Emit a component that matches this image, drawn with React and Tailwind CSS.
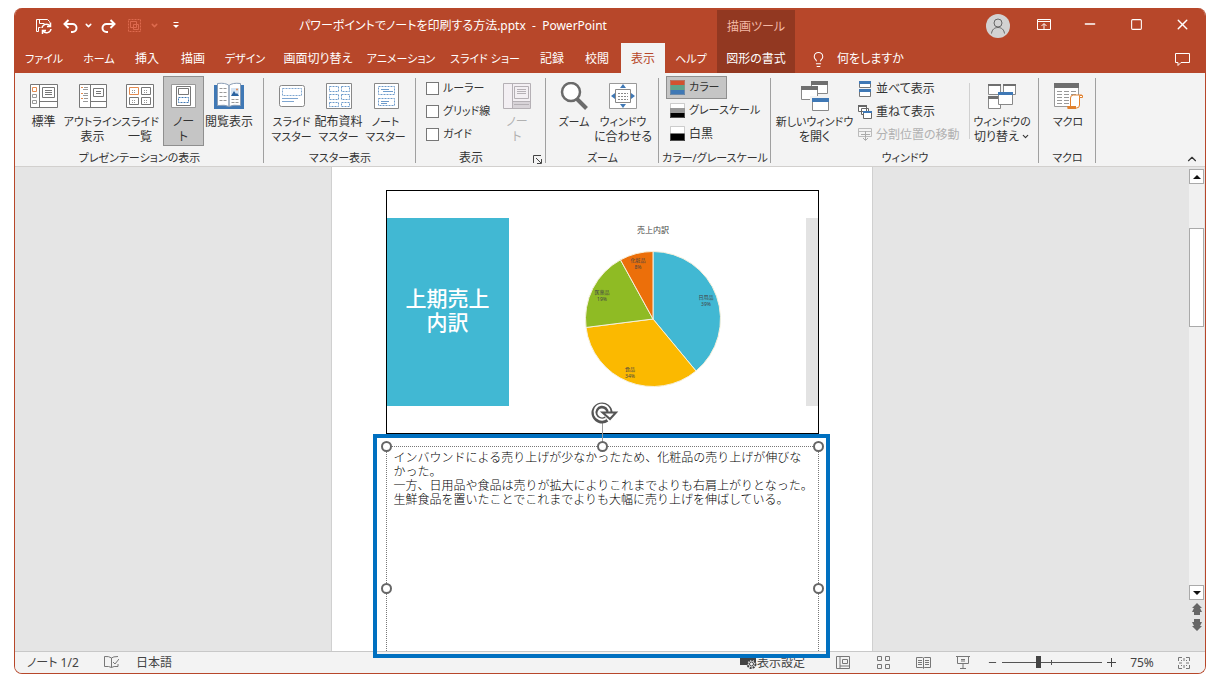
import React from "react";
import { ChevronDown, ChevronUp, Lightbulb, Minus, Square, X } from "lucide-react";

const TABS = [
  { label: "ファイル", width: "w-[58px]" },
  { label: "ホーム", width: "w-[52px]" },
  { label: "挿入", width: "w-[44px]" },
  { label: "描画", width: "w-[48px]" },
  { label: "デザイン", width: "w-[56px]" },
  { label: "画面切り替え", width: "w-[90px]" },
  { label: "アニメーション", width: "w-[76px]" },
  { label: "スライド ショー", width: "w-[92px]" },
  { label: "記録", width: "w-[42px]" },
  { label: "校閲", width: "w-[48px]" },
  { label: "表示", width: "w-[44px]", active: true },
  { label: "ヘルプ", width: "w-[52px]" },
  { label: "図形の書式", width: "w-[78px]", context: true },
];

const SLICES = [
  { name: "日用品", percent: 39, color: "#41b8d3", x: 121, y: 48 },
  { name: "食品", percent: 34, color: "#fbb900", x: 45, y: 120 },
  { name: "医薬品", percent: 19, color: "#8fbb24", x: 17, y: 43 },
  { name: "化粧品", percent: 8, color: "#ec6f0a", x: 53, y: 11 },
];

const NOTES = [
  "インバウンドによる売り上げが少なかったため、化粧品の売り上げが伸びな",
  "かった。",
  "一方、日用品や食品は売りが拡大によりこれまでよりも右肩上がりとなった。",
  "生鮮食品を置いたことでこれまでよりも大幅に売り上げを伸ばしている。",
].join("\n");

// long katakana labels are set one size smaller so they fit their buttons
const labelSize = (text) => (/[ァ-ヶー]{3,}/.test(text) ? "text-[11px]" : "text-[12px]");

const Svg = ({ w = 28, h = 26, children, className = "" }) => (
  <svg
    width={w}
    height={h}
    viewBox={`0 0 ${w} ${h}`}
    fill="none"
    stroke="#777"
    className={`shrink-0 ${className}`}
    aria-hidden="true"
  >
    {children}
  </svg>
);

/* ---------- Ribbon icons ---------- */

const NormalIcon = () => (
  <Svg>
    <path d="M.5 1.5h27v23H.5zM9.5 1.5v23M9.5 18.5h18" fill="#fff" />
    <path d="M12.5 4.5h12v10h-12zM15 7.5h7M15 9.5h7M15 11.5h7" />
    <path d="M2.5 4.5h4v4h-4z" stroke="#e38a4f" />
    <path d="M2.5 11.5h4v3h-4zM2.5 17.5h4v3h-4z" stroke="#999" />
  </Svg>
);

const OutlineIcon = () => (
  <Svg>
    <path d="M.5 1.5h27v23H.5zM11.5 1.5v23M11.5 18.5h16" fill="#fff" />
    <path d="M14.5 5.5h10v8h-10zM17 8.5h5M17 10.5h5" />
    <path d="M2 4.5h2M2 10.5h2M2 15.5h2" stroke="#e38a4f" />
    <path d="M5 4.5h4M4 6.5h5M5 10.5h4M4 12.5h5M5 15.5h4M4 18.5h5" stroke="#999" />
  </Svg>
);

const SorterIcon = () => (
  <Svg>
    <path d="M.5 1.5h27v23H.5z" fill="#fff" />
    <path d="M3.5 4.5h9v7h-9z" stroke="#e38a4f" />
    <path d="M15.5 4.5h9v7h-9zM3.5 14.5h9v7h-9zM15.5 14.5h9v7h-9z" />
    <path d="M6 7.5h4M6 9.5h4M18 7.5h4M18 9.5h4M6 17.5h4M6 19.5h4M18 17.5h4M18 19.5h4" stroke="#999" strokeDasharray="1 1" />
  </Svg>
);

const NotesPageIcon = () => (
  <Svg>
    <path d="M1.5 1.5h24v23h-24z" fill="#fff" stroke="#999" />
    <path d="M6.5 3.5h14v19h-14zM8.5 5.5h10v6h-10z" />
    <path d="M8.5 14.5h10v5h-10z" stroke="#3f78b5" strokeDasharray="2 1" />
  </Svg>
);

const ReadingIcon = () => (
  <Svg w={30} h={28}>
    <path d="M0 3h5v22H0zM25 3h5v22h-5zM0 23h30v4H0z" fill="#3f78b5" stroke="none" />
    <path d="M3.5 1.5q8-1 11.5 2v21q-4-2-11.5-1zM26.5 1.5q-8-1-11.5 2v21q4-2 11.5-1z" fill="#fff" stroke="#8a9db5" />
    <path d="M5.5 6.5h7M5.5 10.5h7M5.5 14.5h7M5.5 18.5h7M17.5 17.5h7M17.5 20.5h7" stroke="#999" strokeDasharray="3 1" />
    <path d="M17 6h8v8h-8z" fill="#d6e4f3" stroke="none" />
    <path d="M17 14l3-5 2 3 1-1 2 3z" fill="#2b63a0" stroke="none" />
    <circle cx="23" cy="7.5" r="1" fill="#e38a4f" stroke="none" />
  </Svg>
);

const SlideMasterIcon = () => (
  <Svg>
    <rect x="1.5" y="2.5" width="25" height="21" rx="2" fill="#fff" stroke="#888" />
    <path d="M4.5 5.5h19v7h-19z" stroke="#7fa6d0" strokeDasharray="2 1" />
    <path d="M4 15.5h16M4 18.5h12" stroke="#7fa6d0" />
  </Svg>
);

const HandoutIcon = () => (
  <Svg>
    <path d="M1.5.5h25v25h-25z" fill="#fff" stroke="#888" />
    <path
      d="M4.500 3.500h9v5h-9zM16.500 3.500h8v5h-8zM4.500 11.500h9v5h-9zM16.500 11.500h8v5h-8zM4.500 19.500h9v4h-9zM16.500 19.500h8v4h-8z"
      stroke="#6d9bcb"
      strokeDasharray="2 1"
    />
  </Svg>
);

const NotesMasterIcon = () => (
  <Svg>
    <path d="M2.5.5h24v25h-24z" fill="#fff" stroke="#888" />
    <path d="M6.5 3.500h16v8h-16zM6.500 15.500h16v7h-16z" stroke="#6d9bcb" strokeDasharray="2 1" />
    <path d="M9 6.5h8M11 8.5h10M9 18.500h8M9 20.500h6" stroke="#6d9bcb" />
  </Svg>
);

const NotesPaneIcon = () => (
  <Svg>
    <path d="M.5.5h27v25H.5z" fill="#f3eff3" stroke="#b5b0b5" />
    <path d="M10 19h17v6H10z" fill="#d8d3d8" stroke="none" />
    <path d="M9.5.5v25M9.5 18.5h18M11.5 3.5h14v12h-14zM14 6.5h9M14 8.5h9M14 10.5h9M11 21.5h15" stroke="#b5b0b5" />
  </Svg>
);

const ZoomIcon = () => (
  <Svg h={28}>
    <path d="M17 17l9.500 9.500" stroke="#6b6b6b" strokeWidth="4" />
    <circle cx="11" cy="10" r="9" fill="#fff" stroke="#6b6b6b" strokeWidth="2.500" />
  </Svg>
);

const FitIcon = () => (
  <Svg>
    <path d="M.5.5h27v25H.5z" fill="#fff" stroke="#999" />
    <path d="M6.5 6.5h15v13h-15z" stroke="#888" />
    <path d="M9 10.500h10M9 13.500h10M9 16.500h10" stroke="#888" strokeDasharray="2 1" />
    <path d="M14 1l3 4h-6zM14 25l3-4h-6zM2 13l4-3v6zM26 13l-4-3v6z" fill="#3f78b5" stroke="none" />
  </Svg>
);

const NewWindowIcon = () => (
  <Svg h={30}>
    <path d="M10.5.5h16v12h-16z" fill="#fff" stroke="#888" />
    <path d="M10 0h17v4H10z" fill="#6f6f6f" stroke="none" />
    <path d="M.5 5.500h16v13H.5z" fill="#fff" stroke="#888" />
    <path d="M0 5h17v4H0z" fill="#6f6f6f" stroke="none" />
    <path d="M9 15h19v15H9z" fill="#f3f3f3" stroke="none" />
    <path d="M11.5 17.500h16v12h-16z" fill="#fff" stroke="#888" />
    <path d="M11 17h17v4H11z" fill="#3f78b5" stroke="none" />
  </Svg>
);

const SwitchWindowIcon = () => (
  <Svg>
    <path d="M.5 1.500h12v10H.5zM15.500 1.500h12v10h-12zM.5 14.500h12v11H.5z" fill="#fff" stroke="#888" />
    <path d="M0 1h13v2H0zM15 1h13v2H15zM0 13h13v3H0z" fill="#6f6f6f" stroke="none" />
    <path d="M10.500 10.500h14v11h-14z" fill="#fff" stroke="#888" />
    <path d="M10 9h15v3H10z" fill="#3f78b5" stroke="none" />
  </Svg>
);

const MacroIcon = () => (
  <Svg w={30} h={28}>
    <path d="M1.500 1.500h24v23h-24z" fill="#fff" stroke="#999" />
    <path d="M1 1h25v5H1z" fill="#6f6f6f" stroke="none" />
    <path d="M4 9.500h20M4 12.500h20M4 15.500h20M4 18.500h20M4 21.500h20" stroke="#999" strokeDasharray="5 2" />
    <path d="M17.500 24v-8q0-3 3-3h8q-2 1-2 3v7q0 3-3 3h-9q3 0 3-2z" fill="#fff" stroke="#e0812f" />
    <path d="M14 24h9v3h-8z" fill="#e0812f" stroke="none" />
    <path d="M26.500 13.500h3v2h-3z" fill="#fff" stroke="#e0812f" />
  </Svg>
);

const ArrangeIcon = () => (
  <Svg w={14} h={16}>
    <path d="M1.500.5h11v6h-11zM1.500 9.500h11v6h-11z" fill="#fff" />
    <path d="M1 0h12v3H1zM1 8h12v3H1z" fill="#3f78b5" stroke="none" />
  </Svg>
);

const CascadeIcon = () => (
  <Svg w={14} h={14}>
    <path d="M.5.5h8v6h-8zM3.500 3.500h7v6h-7z" fill="#fff" stroke="#666" />
    <path d="M0 0h9v2H0z" fill="#666" stroke="none" />
    <path d="M5.500 6.500h8v7h-8z" fill="#fff" stroke="#666" />
    <path d="M5 6h9v2H5z" fill="#3f78b5" stroke="none" />
  </Svg>
);

const SplitIcon = () => (
  <Svg w={14} h={13}>
    <path d="M.5.5h13v8H.5zM0 3.500h14" stroke="#bbb" />
    <path d="M7.500 3v9M3 6.500h9M5 10l2.500 2.500L10 10" stroke="#aaa" />
  </Svg>
);

const Swatch = ({ colors }) => (
  <Svg w={15} h={15}>
    {colors.map((c, i) => (
      <rect key={c} y={(15 / colors.length) * i} width="15" height={15 / colors.length} fill={c} stroke="none" />
    ))}
    <path d="M.5.5h14v14H.5z" stroke="#999" strokeOpacity=".5" />
  </Svg>
);

/* ---------- Ribbon pieces ---------- */

const BigButton = ({ icon, lines, width, active, disabled, arrow }) => (
  <button
    type="button"
    disabled={disabled}
    className={`flex h-[70px] shrink-0 flex-col items-center border pt-[5px] whitespace-nowrap ${width} ${
      active ? "border-[#8f8f8f] bg-[#c5c5c5]" : "border-transparent"
    } ${disabled ? "text-[#b1b1b1]" : ""}`}
  >
    <span className="flex h-7 items-center">{icon}</span>
    <span className="mt-1 flex flex-col items-center leading-[15px]">
      {lines.map((line, i) => (
        <span key={i} className={`flex items-center ${labelSize(line)}`}>
          {line}
          {arrow && i === lines.length - 1 && <ChevronDown size={9} strokeWidth={3} className="ml-0.5" />}
        </span>
      ))}
    </span>
  </button>
);

const SmallButton = ({ icon, label, active, disabled }) => (
  <button
    type="button"
    disabled={disabled}
    className={`flex h-[23px] items-center gap-1 self-start border px-[3px] whitespace-nowrap ${labelSize(label)} ${
      active ? "border-[#8f8f8f] bg-[#c5c5c5] pr-1.5" : "border-transparent"
    } ${disabled ? "text-[#b1b1b1]" : ""}`}
  >
    {icon}
    {label}
  </button>
);

const Group = ({ label, width, pad = "pl-1", launcher, children }) => (
  <section className={`relative flex shrink-0 flex-col ${width}`}>
    <div className={`flex h-[75px] ${pad}`}>{children}</div>
    <div
      className={`flex h-4 items-center justify-center leading-4 whitespace-nowrap ${labelSize(label)} ${
        launcher ? "pr-5" : ""
      }`}
    >
      {label}
    </div>
    {launcher && (
      <button type="button" aria-label="グリッドの設定" className="absolute right-1 bottom-0.5">
        <Svg w={9} h={9}>
          <path d="M.5 8V.5H8M3 3l5 5M8.500 4v4.500H4" stroke="#444" />
        </Svg>
      </button>
    )}
    <span className="absolute top-0.5 right-0 h-[85px] w-px bg-[#a0a0a0]" />
  </section>
);

const Ribbon = () => (
  <div className="flex h-[94px] border-b border-[#d2d0ce] bg-[#f3f3f3] pt-[3px] text-[#333]">
    <Group label="プレゼンテーションの表示" width="w-[249px]">
      <BigButton icon={<NormalIcon />} lines={["標準"]} width="w-[49px]" />
      <BigButton icon={<OutlineIcon />} lines={["アウトライン", "表示"]} width="w-[49px]" />
      <BigButton icon={<SorterIcon />} lines={["スライド", "一覧"]} width="w-[46px]" />
      <BigButton icon={<NotesPageIcon />} lines={["ノー", "ト"]} width="w-[41px]" active />
      <BigButton icon={<ReadingIcon />} lines={["閲覧表示"]} width="w-[50px]" />
    </Group>
    <Group label="マスター表示" width="w-[152px]">
      <BigButton icon={<SlideMasterIcon />} lines={["スライド", "マスター"]} width="w-[47px]" />
      <BigButton icon={<HandoutIcon />} lines={["配布資料", "マスター"]} width="w-[47px]" />
      <BigButton icon={<NotesMasterIcon />} lines={["ノート", "マスター"]} width="w-[47px]" />
    </Group>
    <Group label="表示" width="w-[130px]" pad="pl-2.5" launcher>
      <div className="flex w-[72px] flex-col pt-px">
        {["ルーラー", "グリッド線", "ガイド"].map((label) => (
          <label key={label} className={`flex h-[23px] items-center gap-1 whitespace-nowrap ${labelSize(label)}`}>
            <input type="checkbox" className="size-[13px] appearance-none border border-[#777] bg-white" />
            {label}
          </label>
        ))}
      </div>
      <BigButton icon={<NotesPaneIcon />} lines={["ノー", "ト"]} width="w-[38px]" disabled />
    </Group>
    <Group label="ズーム" width="w-[113px]" pad="pl-1.5">
      <BigButton icon={<ZoomIcon />} lines={["ズーム"]} width="w-[44px]" />
      <BigButton icon={<FitIcon />} lines={["ウィンドウ", "に合わせる"]} width="w-[54px]" />
    </Group>
    <Group label="カラー/グレースケール" width="w-[112px]" pad="pl-[7px]">
      <div className="flex flex-col">
        <SmallButton icon={<Swatch colors={["#d35230", "#5fa38b", "#3f78b5"]} />} label="カラー" active />
        <SmallButton icon={<Swatch colors={["#ffffff", "#999999", "#000000"]} />} label="グレースケール" />
        <SmallButton icon={<Swatch colors={["#ffffff", "#000000"]} />} label="白黒" />
      </div>
    </Group>
    <Group label="ウィンドウ" width="w-[268px]">
      <BigButton icon={<NewWindowIcon />} lines={["新しいウィンドウ", "を開く"]} width="w-[79px]" />
      <div className="flex w-[115px] flex-col pt-px">
        <SmallButton icon={<ArrangeIcon />} label="並べて表示" />
        <SmallButton icon={<CascadeIcon />} label="重ねて表示" />
        <SmallButton icon={<SplitIcon />} label="分割位置の移動" disabled />
      </div>
      <span className="mt-[7px] h-14 w-px bg-[#d0d0d0]" />
      <BigButton icon={<SwitchWindowIcon />} lines={["ウィンドウの", "切り替え"]} width="w-[64px]" arrow />
    </Group>
    <Group label="マクロ" width="w-[57px]">
      <BigButton icon={<MacroIcon />} lines={["マクロ"]} width="w-[50px]" />
    </Group>
    <button type="button" aria-label="リボンを折りたたむ" className="mr-1.5 ml-auto self-end">
      <ChevronUp size={14} strokeWidth={2} />
    </button>
  </div>
);

/* ---------- Header ---------- */

const QuickAccess = () => (
  <div className="flex h-full w-[182px] items-center pl-5 text-white">
    <button type="button" aria-label="上書き保存" className="w-[28px]">
      <Svg w={17} h={16}>
        <path d="M3.500 13.500h-2v-12h11l2 2v1M4.500 1.500v4h5M3.500 13.500v-4h2" stroke="#fff" />
        <path d="M7 10a4.500 4.500 0 0 1 8-2M15.500 4.500V8.500H12M16 11a4.500 4.500 0 0 1-8 2M7.500 16v-3.500H11" stroke="#fff" strokeWidth="1.500" />
      </Svg>
    </button>
    <button type="button" aria-label="元に戻す" className="flex w-[38px] items-center gap-1.5">
      <Svg w={15} h={14}>
        <path d="M5.500 1L1.500 5l4 4M2 5h7.500a4 4 0 0 1 0 8H8" stroke="#fff" strokeWidth="2" />
      </Svg>
      <ChevronDown size={9} strokeWidth={4} />
    </button>
    <button type="button" aria-label="やり直し" className="w-[26px]">
      <Svg w={15} h={14}>
        <path d="M9.500 1l4 4-4 4M13 5H5.500a4 4 0 0 0 0 8H7" stroke="#fff" strokeWidth="2" />
      </Svg>
    </button>
    <button type="button" aria-label="グループ化" disabled className="flex w-[46px] items-center gap-2 text-[#dd6a4e]">
      <Svg w={15} h={15}>
        <path d="M1.500 1.500h12v12h-12z" stroke="#dd6a4e" strokeDasharray="2 1" />
        <path d="M3.500 3.500h6v6h-6zM6.500 6.500h5v5h-5z" stroke="#dd6a4e" />
      </Svg>
      <ChevronDown size={9} strokeWidth={4} />
    </button>
    <button type="button" aria-label="クイック アクセス ツール バーのカスタマイズ">
      <Svg w={6} h={7}>
        <path d="M.5.5h5" stroke="#fff" />
        <path d="M0 3h6L3 6z" fill="#fff" stroke="none" />
      </Svg>
    </button>
  </div>
);

const Header = () => (
  <header className="bg-[#b7472a] text-white">
    <div className="flex h-[35px]">
      <div className="flex w-[702px] shrink-0 items-center">
        <QuickAccess />
        <h1 className="flex-1 pr-2 text-center whitespace-pre">
          パワーポイントでノートを印刷する方法.pptx{"  -  "}PowerPoint
        </h1>
      </div>
      <div className="mt-0.5 flex w-[78px] shrink-0 items-center justify-center bg-[#923821] text-[#f3b9a6]">
        描画ツール
      </div>
      <div className="ml-auto flex">
        <button type="button" aria-label="アカウント" className="flex w-[46px] items-center justify-center">
          <Svg w={24} h={24}>
            <circle cx="12" cy="12" r="12" fill="#d2d2d2" stroke="none" />
            <circle cx="12" cy="9" r="4" stroke="#666" />
            <path d="M5.500 19.500c.5-4 3-6 6.500-6s6 2 6.500 6" stroke="#666" />
          </Svg>
        </button>
        <button type="button" aria-label="リボンの表示オプション" className="flex w-[46px] items-center justify-center pb-[3px]">
          <Svg w={14} h={11}>
            <path d="M.5.5h13v10H.5zM1 2.500h12M7 10V5M4.500 7L7 4.500 9.500 7" stroke="#fff" />
          </Svg>
        </button>
        <button type="button" aria-label="最小化" className="flex w-[46px] items-center justify-center pb-[3px]">
          <Minus size={16} strokeWidth={2} />
        </button>
        <button type="button" aria-label="最大化" className="flex w-[46px] items-center justify-center pb-[3px]">
          <Square size={13} strokeWidth={2} />
        </button>
        <button type="button" aria-label="閉じる" className="flex w-[46px] items-center justify-center pb-[3px]">
          <X size={17} strokeWidth={2} />
        </button>
      </div>
    </div>
    <nav className="flex h-[30px] items-stretch">
      {TABS.map((tab) => (
        <button
          key={tab.label}
          type="button"
          className={`shrink-0 pt-0.5 whitespace-nowrap ${labelSize(tab.label)} ${tab.width} ${
            tab.active ? "bg-[#f3f3f3] text-[#b7472a]" : tab.context ? "bg-[#923821]" : ""
          }`}
        >
          {tab.label}
        </button>
      ))}
      <button type="button" className="flex items-center gap-2.5 pt-0.5 pl-[15px] whitespace-nowrap">
        <Lightbulb size={17} strokeWidth={1.5} />
        何をしますか
      </button>
      <button type="button" aria-label="コメント" className="ml-auto flex w-[46px] items-center justify-center pt-0.5">
        <Svg w={15} h={13}>
          <path d="M.5.5h14v9H6l-3 3v-3H.5z" stroke="#fff" />
        </Svg>
      </button>
    </nav>
  </header>
);

/* ---------- Slide and notes ---------- */

const point = (percent, r = 67.5) => {
  const a = (percent / 100) * Math.PI * 2;
  return `${68 + r * Math.sin(a)} ${68 - r * Math.cos(a)}`;
};

const PieChart = () => {
  let from = 0;
  return (
    <svg width="136" height="136" viewBox="0 0 136 136" role="img" aria-label="売上内訳">
      {SLICES.map((s) => {
        const d = `M68 68L${point(from)}A67.5 67.5 0 0 1 ${point(from + s.percent)}Z`;
        from += s.percent;
        return <path key={s.name} d={d} fill={s.color} stroke="#f6f0dc" />;
      })}
      {SLICES.map((s) => (
        <text key={s.name} textAnchor="middle" fill="#444" fontSize="5">
          <tspan x={s.x} y={s.y}>{s.name}</tspan>
          <tspan x={s.x} y={s.y + 7}>{s.percent}%</tspan>
        </text>
      ))}
    </svg>
  );
};

const Slide = () => (
  <div className="flex h-[244px] border border-black pt-[27px]">
    <h2 className="flex h-[188px] w-[122px] flex-col items-center justify-center bg-[#41b8d3] pb-1 text-[21px] leading-6 font-medium text-white">
      <span>上期売上</span>
      <span>内訳</span>
    </h2>
    <div className="flex flex-1 flex-col items-center pt-1 pr-2">
      <h3 className="mb-[13px] text-[8px] leading-4 text-[#444]">売上内訳</h3>
      <PieChart />
    </div>
    <div className="h-[188px] w-3 bg-[#e3e3e3]" />
  </div>
);

const Handle = ({ className }) => (
  <span className={`absolute size-[11px] rounded-full border-2 border-[#666] bg-white ${className}`} />
);

const NotesBox = () => (
  <div className="relative z-10 -mr-[11px] -mb-[7px] -ml-[13px] flex flex-1 border-4 border-[#0070c0] pt-2 pr-[7px] pb-[3px] pl-[9px]">
    <div className="relative flex-1 border-x border-t border-dotted border-[#777]">
      <textarea
        aria-label="ノート"
        wrap="off"
        readOnly
        value={NOTES}
        className="block size-full resize-none overflow-hidden px-[7px] pt-1 text-[12px] leading-[14px] font-light text-black outline-none"
      />
      <span className="absolute -top-6 left-1/2 h-5 w-px bg-[#999]" />
      <Svg w={28} h={22} className="absolute -top-[45px] left-1/2 -ml-[11px]">
        <path d="M15.500 17a7.500 7.500 0 1 1 3-6" stroke="#555" strokeWidth="6" />
        <path d="M15 16.500a7.500 7.500 0 1 1 3.500-6" stroke="#fff" strokeWidth="2" />
        <path d="M11.500 10.500h13.500l-6 6.500z" fill="#fff" stroke="#555" strokeWidth="2" />
      </Svg>
      <Handle className="-top-1.5 -left-1.5" />
      <Handle className="-top-1.5 left-1/2 -ml-[5px]" />
      <Handle className="-top-1.5 -right-1.5" />
      <Handle className="top-[136px] -left-1.5" />
      <Handle className="top-[136px] -right-1.5" />
    </div>
  </div>
);

const ScrollBar = () => (
  <div className="flex w-[17px] flex-col items-center pt-0.5">
    <button type="button" aria-label="上へ" className="flex size-[15px] items-center justify-center border border-[#aaa] bg-white">
      <Svg w={8} h={4}>
        <path d="M4 0l4 4H0z" fill="#111" stroke="none" />
      </Svg>
    </button>
    <div className="w-[15px] flex-1 bg-[#f1f1f1] pt-11">
      <div className="h-[99px] border border-[#aaa] bg-white" />
    </div>
    <button type="button" aria-label="下へ" className="flex size-[15px] items-center justify-center border border-[#aaa] bg-white">
      <Svg w={8} h={4}>
        <path d="M4 4L0 0h8z" fill="#111" stroke="none" />
      </Svg>
    </button>
    <div className="flex h-[51px] flex-col items-center gap-1 pt-[3px]">
      <button type="button" aria-label="前のスライド">
        <Svg w={10} h={12}>
          <path d="M5 0l5 5H8l2 4H8v3H2V9H0l2-4H0z" fill="#666" stroke="none" />
        </Svg>
      </button>
      <button type="button" aria-label="次のスライド">
        <Svg w={10} h={12}>
          <path d="M5 12l5-5H8l2-4H8V0H2v3H0l2 4H0z" fill="#666" stroke="none" />
        </Svg>
      </button>
    </div>
  </div>
);

/* ---------- Status bar ---------- */

const StatusBar = () => (
  <footer className="flex h-[22px] items-center border-t border-[#c8c8c8] bg-[#f3f3f3] pl-3 whitespace-nowrap text-[#444]">
    <span className="w-[77px]">ノート 1/2</span>
    <button type="button" aria-label="スペル チェック" className="w-[32px]">
      <Svg w={15} h={13}>
        <path d="M7.500 2v9.500M7.500 2Q5 0 .5.5v10q4.500-.5 7 1M7.500 2Q9 .5 14 .5M7.500 11.500q2-1.500 6.500-1V8M9 6l2 2 4-5" />
      </Svg>
    </button>
    <span>日本語</span>
    <button type="button" className="ml-auto flex w-[83px] items-center">
      <Svg w={17} h={13}>
        <path d="M0 0h16v9H0z" fill="#444" stroke="none" />
        <circle cx="11.500" cy="8" r="4" fill="#f3f3f3" stroke="#444" strokeWidth="2" strokeDasharray="2 1" />
        <circle cx="11.500" cy="8" r="2" stroke="#444" />
      </Svg>
      表示設定
    </button>
    <button type="button" aria-label="標準" className="flex w-10 justify-center">
      <Svg w={14} h={13}>
        <path d="M.5.5h13v12H.5zM4 .5v12M6.500 3.500h5v4h-5zM4 10h10" />
      </Svg>
    </button>
    <button type="button" aria-label="スライド一覧" className="flex w-10 justify-center">
      <Svg w={13} h={13}>
        <path d="M.5.5h4v4h-4zM8.500.5h4v4h-4zM.5 8.500h4v4h-4zM8.500 8.500h4v4h-4z" />
      </Svg>
    </button>
    <button type="button" aria-label="閲覧表示" className="flex w-10 justify-center">
      <Svg w={15} h={13}>
        <path d="M7.500 2v10M.5 1.500h6l1 .5 1-.5h6v10h-6l-1 1-1-1h-6zM2 4.500h4M2 6.500h4M2 8.500h4M9 4.500h4M9 6.500h4M9 8.500h4" />
      </Svg>
    </button>
    <button type="button" aria-label="スライド ショー" className="flex w-10 justify-center">
      <Svg w={14} h={13}>
        <path d="M0 .5h14M1.500 1v6.500h11V1M7 8v4M4 12.500h6M5 3.500h4M5 5h4" />
      </Svg>
    </button>
    <button type="button" aria-label="縮小" className="flex w-[19px] justify-center">
      <Minus size={11} />
    </button>
    <div className="relative flex w-[100px] items-center">
      <span className="absolute left-[49px] h-[5px] w-px bg-[#555]" />
      <input
        type="range"
        aria-label="ズーム"
        min="0"
        max="100"
        defaultValue="36"
        className="relative h-3 w-full appearance-none bg-transparent [&::-webkit-slider-runnable-track]:h-px [&::-webkit-slider-runnable-track]:bg-[#555] [&::-webkit-slider-thumb]:-mt-[6px] [&::-webkit-slider-thumb]:h-3 [&::-webkit-slider-thumb]:w-[5px] [&::-webkit-slider-thumb]:appearance-none [&::-webkit-slider-thumb]:bg-[#444]"
      />
    </div>
    <button type="button" aria-label="拡大" className="flex w-[19px] justify-center">
      <Svg w={9} h={9}>
        <path d="M0 4.500h9M4.500 0v9" stroke="#444" />
      </Svg>
    </button>
    <span className="w-[42px] text-center">75%</span>
    <button type="button" aria-label="ウィンドウに合わせる" className="flex w-[42px] justify-center">
      <Svg w={12} h={12}>
        <path d="M4 .5H.5V4M8 .5h3.500V4M.5 8v3.500H4M11.500 8v3.500H8" />
        <path d="M6 1v3M6 8v3M1 6h3M8 6h3M3 3l1 1M9 3L8 4M3 9l1-1M9 9L8 8" />
      </Svg>
    </button>
  </footer>
);

export default function App() {
  return (
    <div className="flex h-screen min-h-[500px] bg-white px-3.5 py-2 font-['Noto_Sans','Noto_Sans_CJK_JP',sans-serif] text-[12px]">
      <div className="flex min-w-0 flex-1 flex-col overflow-hidden rounded-lg border border-t-0 border-[#b7472a] bg-[#e5e5e5] [font-feature-settings:'palt']">
        <Header />
        <Ribbon />
        <div className="flex min-h-0 flex-1">
          <main className="flex flex-1 justify-center [font-feature-settings:normal]">
            <div className="flex w-[542px] flex-col border-x border-[#d0d0d0] bg-white pt-[23px] pr-[53px] pl-[54px]">
              <Slide />
              <NotesBox />
            </div>
          </main>
          <ScrollBar />
        </div>
        <StatusBar />
      </div>
    </div>
  );
}
